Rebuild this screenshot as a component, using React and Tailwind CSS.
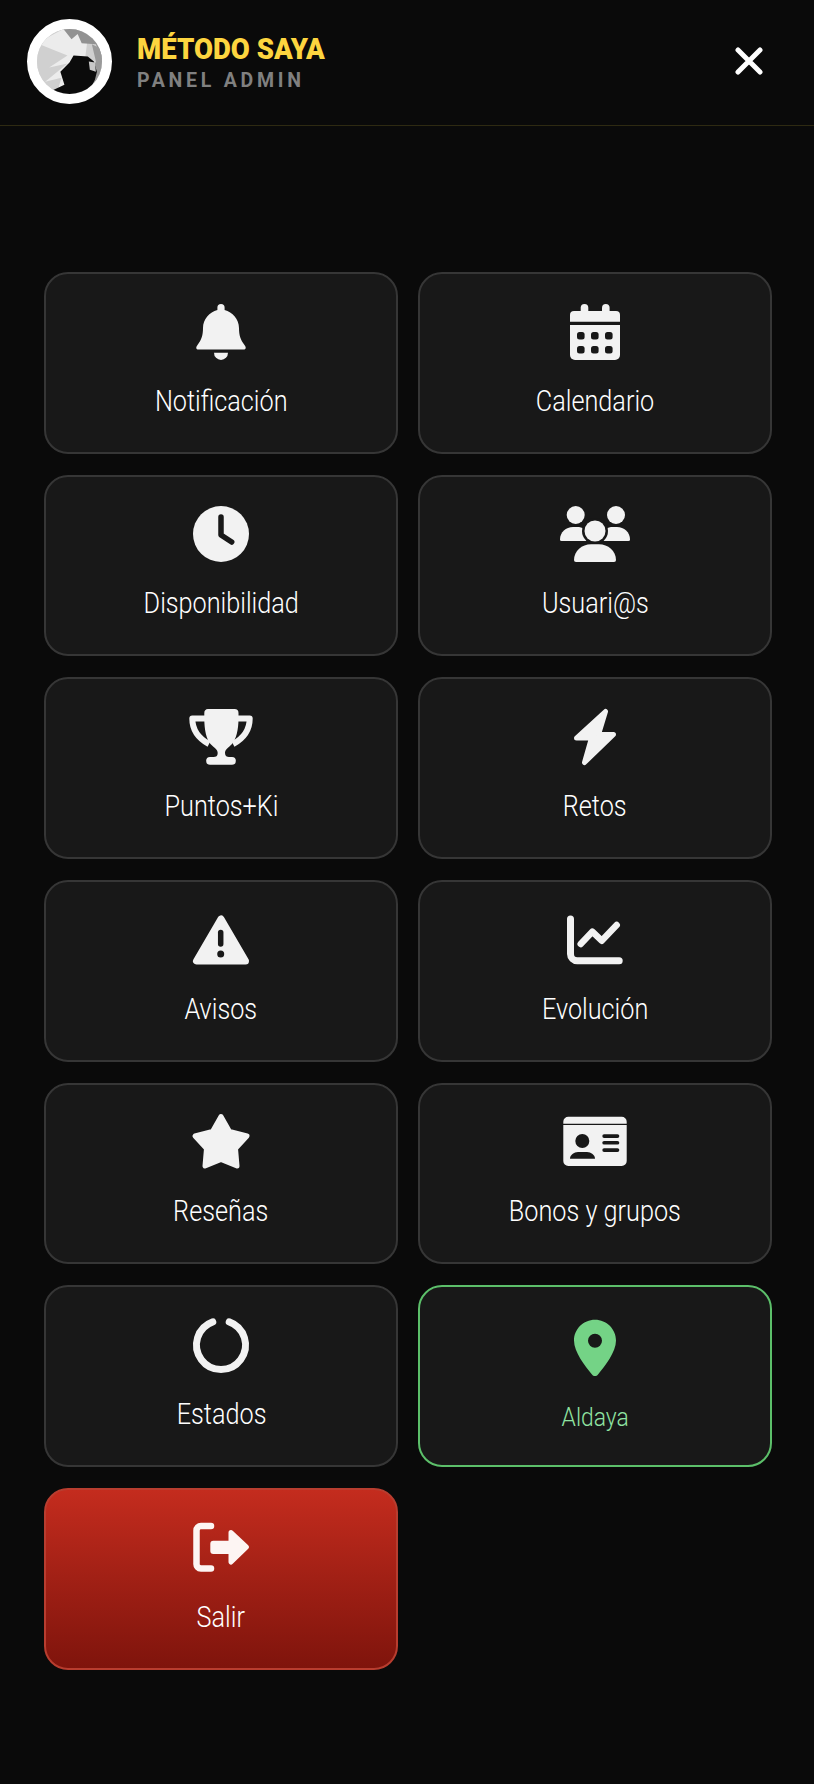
const C = '#f2f2f2';
const D = '#181818';

function Svg({ children }) {
  return (
    <svg width="80" height="64" viewBox="-8 0 80 64" className="block shrink-0 overflow-visible" fill={C}>
      {children}
    </svg>
  );
}

const icons = {
  bell: (
    <Svg>
      <path d="M32 4a3.6 3.6 0 0 1 3.6 3.6V10C43.500 12 50 19 50 28C50 35 51.500 40 55.500 45C57.500 47.500 57 49.500 54.500 49.500H9.500C7 49.500 6.500 47.500 8.500 45C12.500 40 14 35 14 28C14 19 20.500 12 28.400 10V7.600A3.600 3.600 0 0 1 32 4Z" />
      <path d="M25 52.700H39A7 7.300 0 0 1 25 52.700Z" />
    </Svg>
  ),
  calendar: (
    <Svg>
      <rect x="17.700" y="4" width="7.600" height="12" rx="3.800" />
      <rect x="39" y="4" width="7.600" height="12" rx="3.800" />
      <path d="M11 11H53A4 4 0 0 1 57 15V21.700H7V15A4 4 0 0 1 11 11Z" />
      <path d="M7 25H57V55A5 5 0 0 1 52 60H12A5 5 0 0 1 7 55Z" />
      {[14, 28, 42].flatMap((x) =>
        [32, 46].map((y) => <rect key={`${x}-${y}`} x={x} y={y} width="7.600" height="7.400" rx="2.500" fill={D} />)
      )}
    </Svg>
  ),
  clock: (
    <Svg>
      <circle cx="32" cy="32" r="28" />
      <path d="M32 15V33L42.700 40" fill="none" stroke={D} strokeWidth="5.500" strokeLinecap="round" strokeLinejoin="round" />
    </Svg>
  ),
  users: (
    <Svg>
      <circle cx="12.700" cy="13" r="9" />
      <circle cx="53" cy="13" r="9" />
      <path d="M-3 37.500C-3 30 3 25 10 25H14C17 25 19 25.500 21 27L24 39H-1.500A1.500 1.500 0 0 1 -3 37.500Z" />
      <path d="M67 37.500C67 30 61 25 54 25H50C47 25 45 25.500 43 27L40 39H65.500A1.500 1.500 0 0 0 67 37.500Z" />
      <circle cx="32" cy="29" r="13" fill={D} />
      <circle cx="32" cy="29" r="10.500" />
      <path d="M11 58C11 49 19 42.300 28 42.300H36C45 42.300 53 49 53 58A2 2 0 0 1 51 60H13A2 2 0 0 1 11 58Z" />
    </Svg>
  ),
  trophy: (
    <Svg>
      <path d="M16 13.400H3.300C3.300 24 9 33 20 39" fill="none" stroke={C} strokeWidth="6" strokeLinejoin="round" />
      <path d="M48 13.400H60.700C60.700 24 55 33 44 39" fill="none" stroke={C} strokeWidth="6" strokeLinejoin="round" />
      <path d="M19 4H45.500A4 4 0 0 1 49.500 8V13C49.500 26 47 34 43 39C39.500 43 36 44 36 48C36 51 38 52 40 52H43A3.850 3.850 0 0 1 43 59.700H21A3.850 3.850 0 0 1 21 52H24.500C27 52 28.700 51 28.700 48C28.700 44 25 43 21.500 39C17.500 34 15.300 26 15.300 13V8A4 4 0 0 1 19 4Z" />
    </Svg>
  ),
  bolt: (
    <Svg>
      <path d="M42.500 6.500L35.500 29.500H50.500L21.500 57.500L28.500 33H13.500Z" stroke={C} strokeWidth="5" strokeLinejoin="round" />
    </Svg>
  ),
  warning: (
    <Svg>
      <path d="M32 11L7.500 53H56.500Z" stroke={C} strokeWidth="7" strokeLinejoin="round" />
      <path d="M31.700 24.500V36" stroke={D} strokeWidth="5.500" strokeLinecap="round" fill="none" />
      <circle cx="31.700" cy="46" r="3.500" fill={D} />
    </Svg>
  ),
  chart: (
    <Svg>
      <path d="M7.500 11V46A6.800 6.800 0 0 0 14.300 52.800H56.200" fill="none" stroke={C} strokeWidth="7" strokeLinecap="round" />
      <path d="M17.700 36L29.300 23.700L38.700 32.700L53.700 17" fill="none" stroke={C} strokeWidth="6.500" strokeLinecap="round" strokeLinejoin="round" />
    </Svg>
  ),
  star: (
    <Svg>
      <path d="M32 6.500L40.500 21.500L58 26L46.500 38.500L48 56L32 49.500L16 56L17.500 38.500L6 26L23.500 21.500Z" stroke={C} strokeWidth="5" strokeLinejoin="round" />
    </Svg>
  ),
  card: (
    <Svg>
      <path d="M5.300 6.700H58.700A5 5 0 0 1 63.700 11.700V13.700H0.300V11.700A5 5 0 0 1 5.300 6.700Z" />
      <path d="M0.300 15H63.700V51A5 5 0 0 1 58.700 56H5.300A5 5 0 0 1 0.300 51Z" />
      <circle cx="19.300" cy="31" r="7" fill={D} />
      <path d="M7 48.700C7 45 11 42 15 42H24C28 42 32 45 32 48.700Z" fill={D} />
      <rect x="39.300" y="24.200" width="17" height="3.700" rx="1.850" fill={D} />
      <rect x="39.300" y="30.900" width="17" height="3.700" rx="1.850" fill={D} />
      <rect x="39.300" y="38.200" width="17" height="3.700" rx="1.850" fill={D} />
    </Svg>
  ),
  ring: (
    <Svg>
      <path d="M40.200 8.900A24.500 24.500 0 1 1 23.800 8.900" fill="none" stroke={C} strokeWidth="7" strokeLinecap="round" />
    </Svg>
  ),
  pin: (
    <svg width="80" height="64" viewBox="-8 0 80 64" className="block shrink-0 overflow-visible" fill="#74d386">
      <path
        fillRule="evenodd"
        d="M32 3.700C43.600 3.700 53 13 53 24.500C53 36 42 50 35 58.500C33.500 60.500 30.500 60.500 29 58.500C22 50 11 36 11 24.500C11 13 20.400 3.700 32 3.700ZM32 17.700A7 7 0 1 0 32 31.700A7 7 0 1 0 32 17.700Z"
      />
    </svg>
  ),
  exit: (
    <svg width="80" height="64" viewBox="-8 0 80 64" className="block shrink-0 overflow-visible" fill="#fdf5f3">
      <path d="M22 10H12A4.500 4.500 0 0 0 7.500 14.500V47.500A4.500 4.500 0 0 0 12 52.500H22" fill="none" stroke="#fdf5f3" strokeWidth="6.500" strokeLinecap="round" />
      <rect x="21.300" y="24.700" width="24" height="13.300" rx="3" />
      <path d="M42 16.500L57.500 31L42 46Z" stroke="#fdf5f3" strokeWidth="5" strokeLinejoin="round" />
    </svg>
  ),
};

const items = [
  ['Notificación', 'bell'],
  ['Calendario', 'calendar'],
  ['Disponibilidad', 'clock'],
  ['Usuari@s', 'users'],
  ['Puntos+Ki', 'trophy'],
  ['Retos', 'bolt'],
  ['Avisos', 'warning'],
  ['Evolución', 'chart'],
  ['Reseñas', 'star'],
  ['Bonos y grupos', 'card'],
  ['Estados', 'ring'],
];

function Tile({ label, icon }) {
  return (
    <button className="flex flex-col items-center justify-center gap-[22px] rounded-3xl border-2 border-[#363636] bg-[#181818]">
      {icons[icon]}
      <span className="block h-[40px] whitespace-nowrap text-[29px] leading-[30px] font-light text-white scale-x-[0.87]">{label}</span>
    </button>
  );
}

export default function App() {
  return (
    <div className="min-h-[1784px] bg-[#0a0a0a] font-['Roboto',sans-serif]">
      <header className="flex h-[126px] items-center justify-between border-b border-[#2e2a12] pr-[51px] pl-[27px]">
        <div className="flex items-center gap-[25px]">
          <div className="-mt-[3px] h-[85px] w-[85px] overflow-hidden rounded-full border-[10.5px] border-white bg-[#d6d6d6]">
            <svg viewBox="0 0 64 64" className="block h-full w-full">
              <rect width="64" height="64" fill="#d0d0d0" />
              <path d="M0 14L30 26L12 38L30 34L8 52L24 48L20 62L46 40L50 8L26 0Z" fill="#ececec" />
              <path d="M26 0L34 10L40 5L44 14L58 15L64 32V0Z" fill="#929292" />
              <path d="M54 15L64 20V56L50 52L58 32Z" fill="#9a9a9a" />
              <path d="M36 26L50 27L56 32L59 42L57 50L50 64H14L16 60L27 55L23 42L32 33Z" fill="#0b0b0b" />
              <path d="M51 32L57 33L58 42L52 40Z" fill="#c8c8c8" />
            </svg>
          </div>
          <div className="-mt-[3px] flex flex-col">
            <span className="block origin-left whitespace-nowrap text-[29.500px] leading-[36px] font-black text-[#fdd53f] scale-x-[0.935]">MÉTODO SAYA</span>
            <span className="mt-[1px] block origin-left whitespace-nowrap text-[21px] leading-[24px] font-bold tracking-[4px] text-[#808080] scale-x-[0.93]">PANEL ADMIN</span>
          </div>
        </div>
        <svg width="28" height="28" viewBox="0 0 28 28" className="block -mt-[4px]" aria-label="Cerrar">
          <path d="M3 3L25 25M25 3L3 25" stroke="#fff" strokeWidth="5" strokeLinecap="round" />
        </svg>
      </header>
      <main className="ml-[44.400px] grid w-[727.300px] grid-cols-2 gap-x-[20.400px] gap-y-[21px] pt-[146px] auto-rows-[181.670px]">
        {items.map(([label, icon]) => (
          <Tile key={label} label={label} icon={icon} />
        ))}
        <button className="flex flex-col items-center justify-center gap-[22px] rounded-3xl border-2 border-[#5cbf6a] bg-[#181818]">
          {icons.pin}
          <span className="block h-[34px] whitespace-nowrap text-[26px] leading-[30px] font-light text-[#8fe3a1] scale-x-[0.88]">Aldaya</span>
        </button>
        <button className="flex flex-col items-center justify-center gap-[22px] rounded-3xl border-2 border-[#b83d2f] bg-linear-to-b from-[#c42c1e] to-[#7f140c]">
          {icons.exit}
          <span className="block h-[40px] whitespace-nowrap text-[29px] leading-[30px] font-light text-white scale-x-[0.87]">Salir</span>
        </button>
      </main>
    </div>
  );
}
